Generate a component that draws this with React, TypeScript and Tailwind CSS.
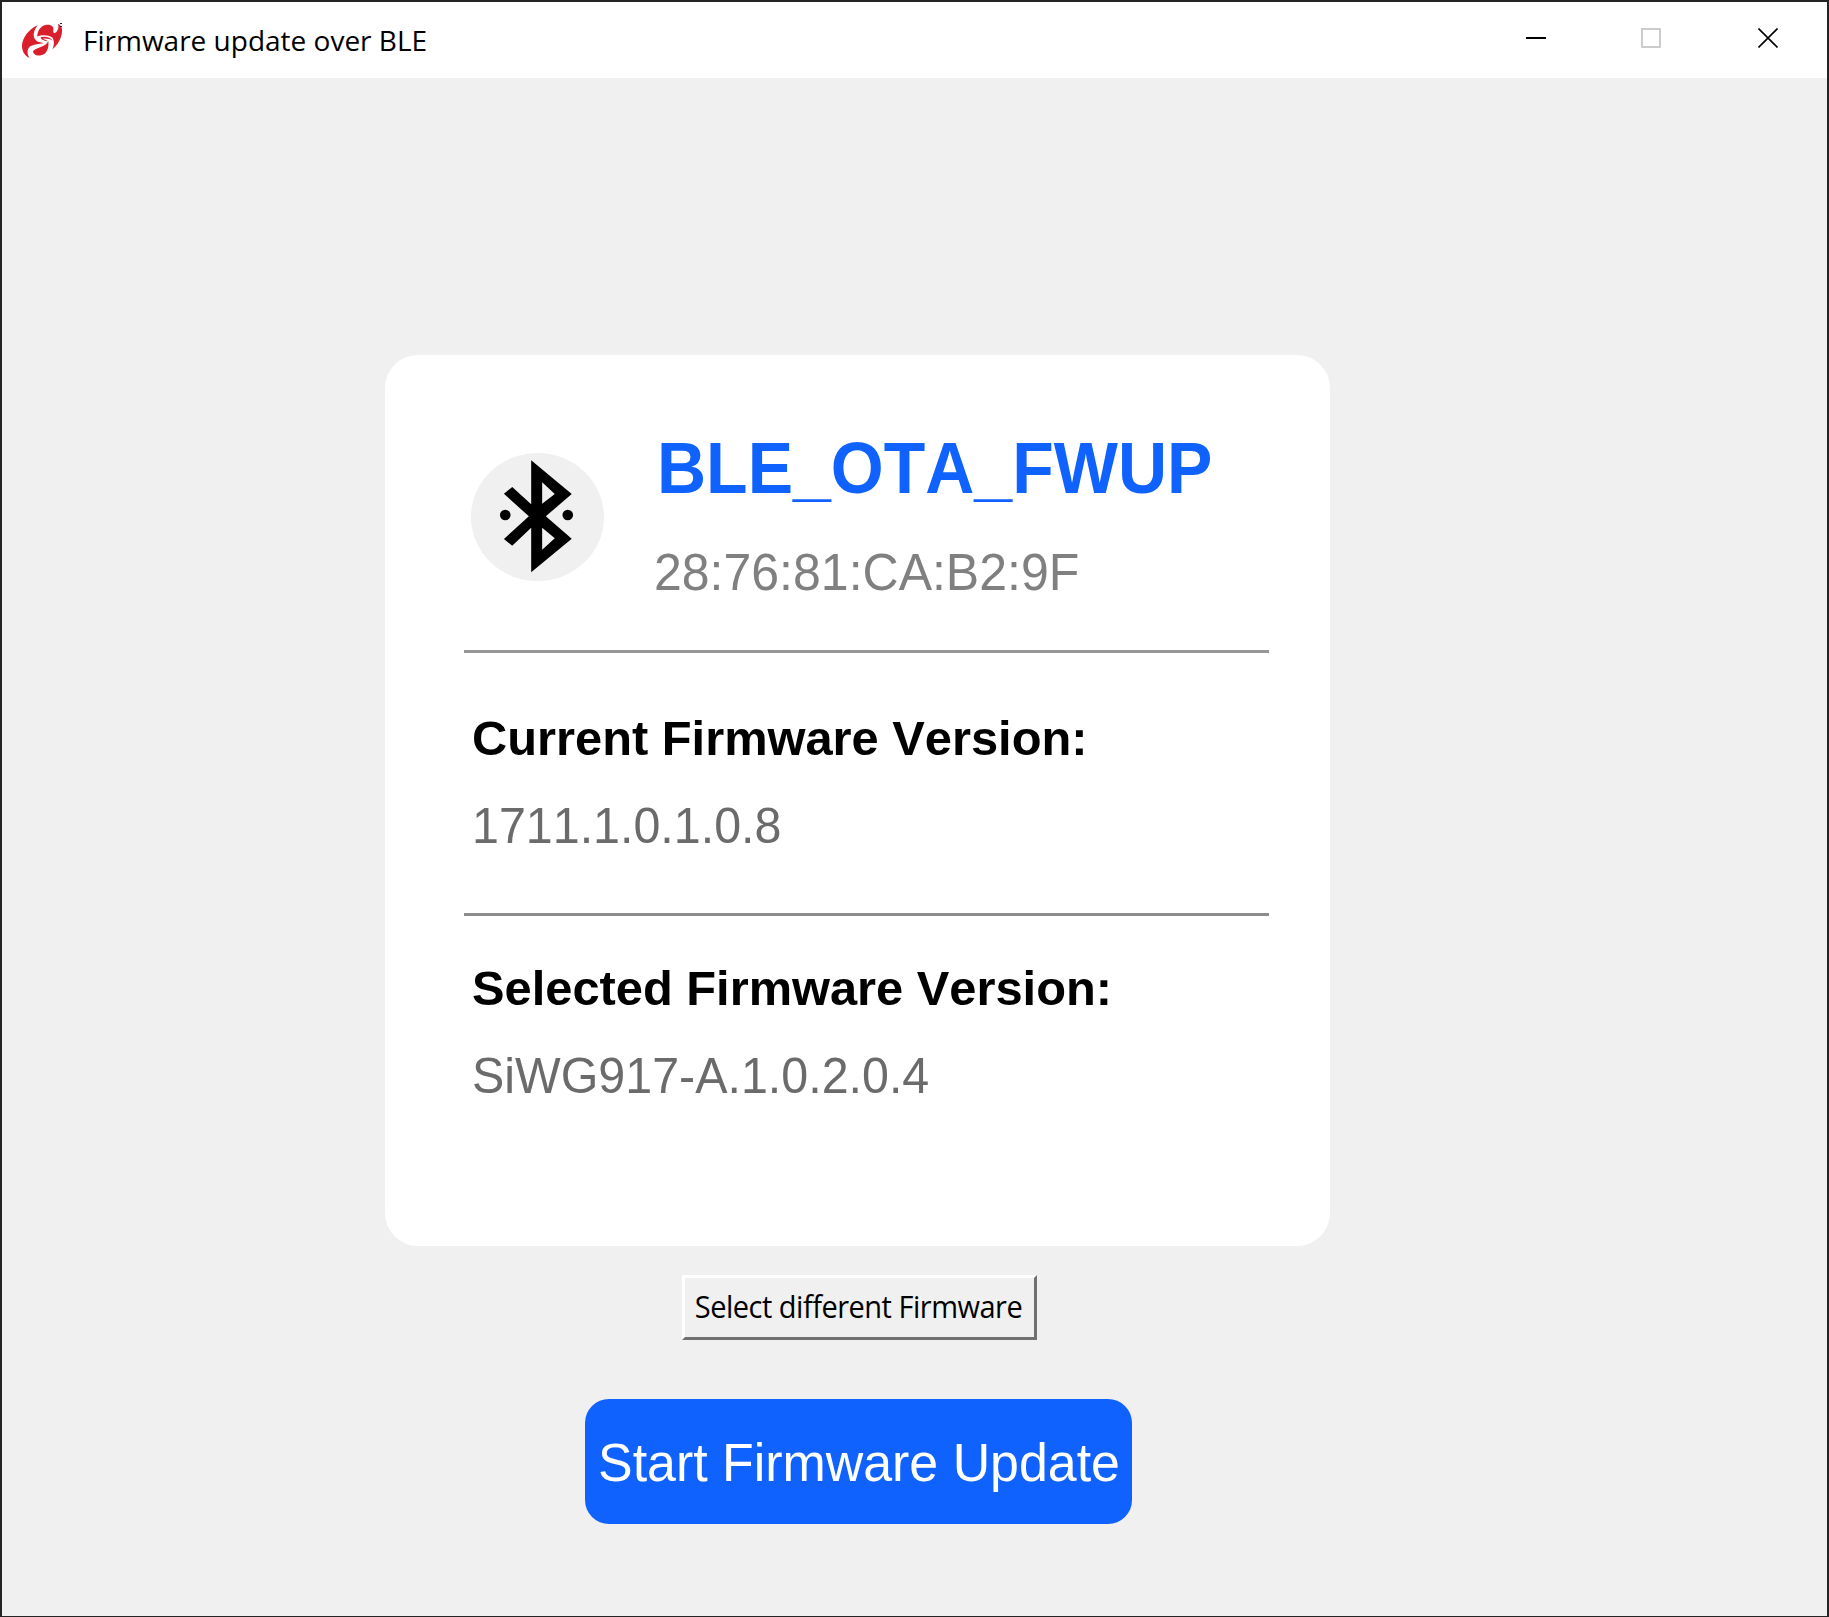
import React from "react";

function Logo() {
  return (
    <svg className="h-[60px] w-[64px]" viewBox="0 0 192 180" fill="#d91f2b">
      <path d="M83 46C58 56 36 84 36 107C36 126 46 138 59 144C53 136 50 124 56 114C64 102 90 103 100 100C102 98 92 98 84 95C68 88 66 68 83 46Z" />
      <path d="M82 80C81 62 93 46 110 44C124 43 132 50 130 59C128 68 133 72 139 66C145 59 147 51 144 42C152 44 158 54 156 66C154 86 142 107 127 118C133 106 134 92 126 82C116 74 94 74 82 80Z" />
      <path d="M115 93C118 116 108 134 93 136C82 139 70 134 69 124C76 112 108 112 115 93Z" />
      <path d="M92 82C105 78 122 82 128 92C122 87 106 84 99 86C106 90 113 90 112 95C110 92 92 92 92 82Z" />
      <path d="M150 39h6v3h-6zM150 48h6v3h-6z" fill="#222" />
    </svg>
  );
}

function BluetoothIcon() {
  return (
    <svg className="h-[128px] w-[133px]" viewBox="0 0 400 384" preserveAspectRatio="none">
      <ellipse cx="200" cy="192" rx="200" ry="192" fill="#f0f0f0" />
      <path
        fillRule="evenodd"
        d="M181 22L303 123L225 190L303 257L181 358V224L124 278L99 258L174 190L99 122L124 102L181 154ZM214 88V152L252 123ZM214 224V290L252 256Z"
      />
      <circle cx="103" cy="186" r="16" />
      <circle cx="291" cy="186" r="16" />
    </svg>
  );
}

function TitleBar() {
  return (
    <header className="flex h-[76px] items-start bg-white">
      <div className="ml-2 mt-2"><Logo /></div>
      <h1 className="ml-[9px] mt-[18px] whitespace-nowrap font-['Open_Sans'] text-[28px] leading-[40px] text-black">
        Firmware update over BLE
      </h1>
      <div className="ml-auto mr-[49px] mt-[26px] flex h-5 items-center">
        <div className="h-[2px] w-5 bg-black" />
        <div className="ml-[95px] size-5 border-2 border-[#ccc]" />
        <svg className="ml-[97px] size-5" viewBox="0 0 20 20" stroke="#000" strokeWidth="1.6">
          <path d="M.5 .5L19.5 19.5M19.5 .5L.5 19.5" />
        </svg>
      </div>
    </header>
  );
}

function FirmwareVersion({ label, value }: { label: string; value: string }) {
  return (
    <div className="ml-[87px] flex flex-col whitespace-nowrap">
      <h3 className="text-[48.8px] font-bold leading-[56px] text-black">{label}</h3>
      <p className="mt-8 origin-left scale-y-[1.02] text-[48.4px] leading-[56px] text-[#6b6b6b]">{value}</p>
    </div>
  );
}

export default function App() {
  return (
    <div className="flex h-[1617px] w-[1829px] flex-col border-2 border-b border-[#242424] bg-[#f0f0f0] font-['Liberation_Sans',sans-serif] [font-kerning:none]">
      <TitleBar />
      <main className="flex grow flex-col">
        <section className="ml-[383px] mt-[277px] flex h-[891px] w-[945px] flex-col rounded-[33px] bg-white">
          <div className="ml-[86px] mt-[80px] flex h-[215px]">
            <div className="mt-[18px]"><BluetoothIcon /></div>
            <div className="ml-[50px] whitespace-nowrap">
              <h2 className="ml-[3px] mt-[-1px] origin-left scale-y-[1.05] text-[68px] font-bold leading-[68px] text-[#0f62fe]">BLE_OTA_FWUP</h2>
              <p className="mt-[42px] origin-left scale-y-[1.05] text-[50px] leading-[56px] text-[#808080]">28:76:81:CA:B2:9F</p>
            </div>
          </div>
          <hr className="ml-[79px] h-[3px] w-[805px] border-0 bg-[#969696]" />
          <div className="mt-[57px] h-[203px]"><FirmwareVersion label="Current Firmware Version:" value="1711.1.0.1.0.8" /></div>
          <hr className="ml-[79px] h-[3px] w-[805px] border-0 bg-[#8c8c8c]" />
          <div className="mt-[44px]"><FirmwareVersion label="Selected Firmware Version:" value="SiWG917-A.1.0.2.0.4" /></div>
        </section>
        <button className="ml-[680px] mt-[29px] h-[65px] w-[355px] whitespace-nowrap border-[3px] border-b-[#707070] border-l-white border-r-[#707070] border-t-white bg-[#f0f0f0] pb-[3px] pr-[2px] font-['Open_Sans'] text-[29px] tracking-[-0.5px] text-black">
          <span className="inline-block scale-y-[1.05]">Select different Firmware</span>
        </button>
        <button className="ml-[583px] mt-[59px] flex h-[125px] w-[547px] items-center justify-center whitespace-nowrap rounded-[24px] bg-[#0f62fe] text-[51.9px] text-white">
          <span className="ml-px mt-[3px] scale-y-[1.03]">Start Firmware Update</span>
        </button>
      </main>
    </div>
  );
}
